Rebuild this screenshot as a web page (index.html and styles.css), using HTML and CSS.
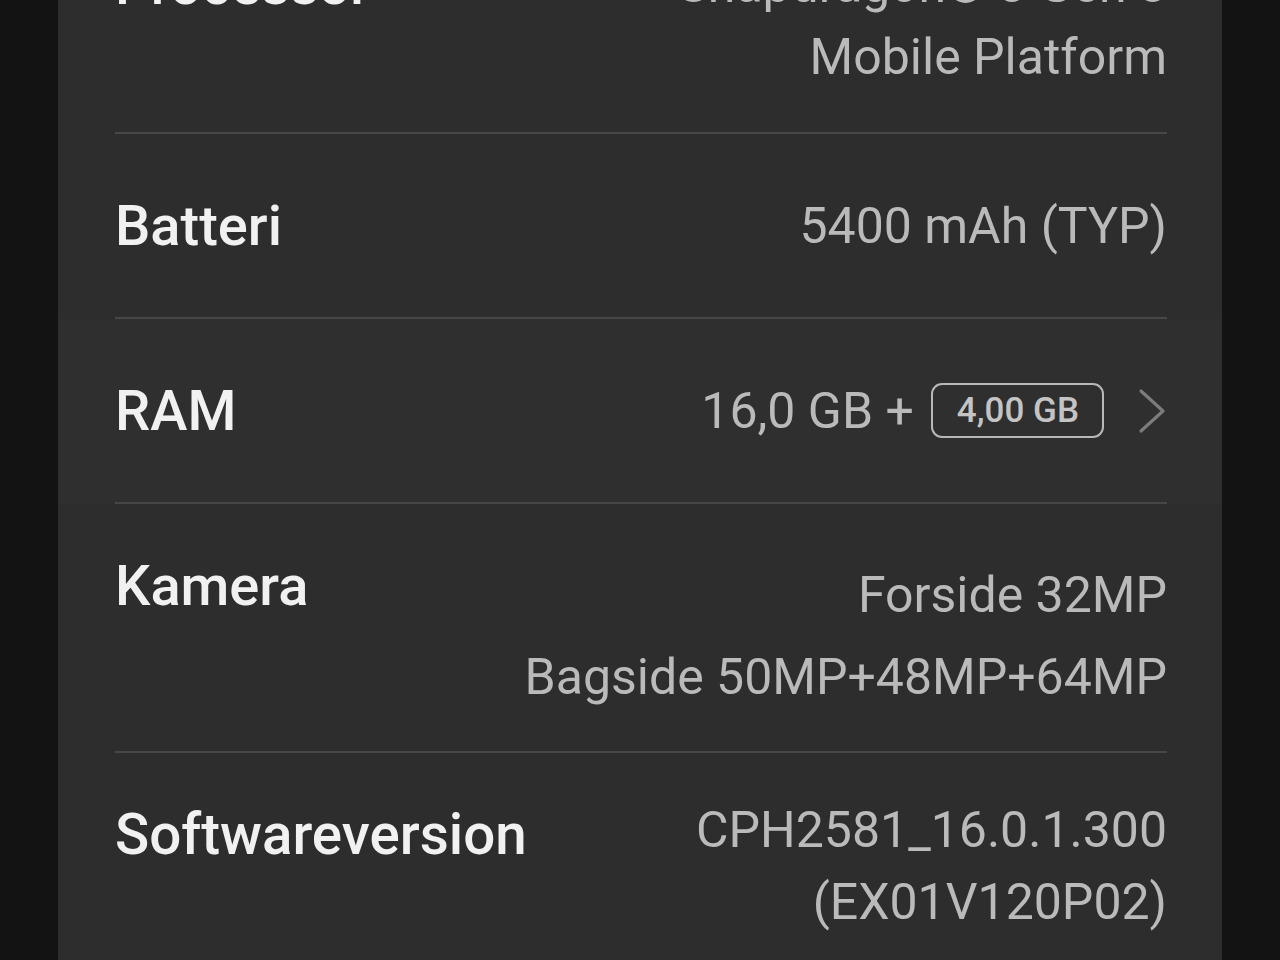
FILE: index.html
```html
<!DOCTYPE html>
<html lang="da">
<head>
<meta charset="utf-8">
<title>Om telefonen</title>
<link rel="stylesheet" href="styles.css">
</head>
<body>
<main class="card">
  <section class="item item--processor">
    <div class="row row--top">
      <div class="label">Processor</div>
      <div class="value">
        <div class="line">Snapdragon® 8 Gen 3</div>
        <div class="line">Mobile Platform</div>
      </div>
    </div>
  </section>
  <section class="item item--single">
    <div class="row row--center">
      <div class="label">Batteri</div>
      <div class="value"><div class="line">5400 mAh (TYP)</div></div>
    </div>
  </section>
  <section class="item item--single item--active">
    <div class="row row--center">
      <div class="label">RAM</div>
      <div class="value value--ram">
        <span class="ram-base">16,0 GB +</span>
        <span class="badge">4,00 GB</span>
        <svg class="chevron" width="30" height="46" viewBox="0 0 30 46" aria-hidden="true">
          <polyline points="4,3 26,23 4,43" fill="none" stroke="#7c7c7c" stroke-width="3.2" stroke-linecap="round" stroke-linejoin="round"/>
        </svg>
      </div>
    </div>
  </section>
  <section class="item item--camera">
    <div class="row row--top">
      <div class="label">Kamera</div>
      <div class="value value--stack">
        <div class="line">Forside 32MP</div>
        <div class="line">Bagside 50MP+48MP+64MP</div>
      </div>
    </div>
  </section>
  <section class="item item--software">
    <div class="row row--top">
      <div class="label">Softwareversion</div>
      <div class="value">
        <div class="line">CPH2581_16.0.1.300</div>
        <div class="line">(EX01V120P02)</div>
      </div>
    </div>
  </section>
</main>
</body>
</html>
```

FILE: styles.css
```css
html, body {
  margin: 0;
  padding: 0;
}

body {
  background: #131313;
  height: 960px;
  overflow: hidden;
  font-family: Roboto, "Noto Sans", "Liberation Sans", sans-serif;
}

.card {
  margin: -93px 58px 0 58px;
  background: #2d2d2d;
}

.item {
  padding: 0 55px 0 57px;
}

.item--active {
  background: #2f2f2f;
}

.row {
  display: flex;
  justify-content: space-between;
  border-bottom: 2px solid #474747;
}

.row--top {
  align-items: flex-start;
}

.row--center {
  align-items: center;
  height: 183px;
}

.item--processor .row {
  padding: 42px 0 39px;
}

.item--camera .row {
  padding: 55px 0 38px;
}

.item--software .row {
  padding: 41px 0 40px;
  border-bottom: none;
}

.label {
  color: #f1f1f1;
  font-size: 56px;
  font-weight: 500;
  line-height: 72px;
  white-space: nowrap;
}

.item--camera .label {
  line-height: 54px;
}

.item--software .label {
  font-size: 56.5px;
  margin-top: 5px;
}

.value {
  color: #bababa;
  font-size: 50px;
  font-weight: 400;
  line-height: 72px;
  text-align: right;
  white-space: nowrap;
}

.value--stack {
  display: flex;
  flex-direction: column;
  gap: 10px;
}

.value--ram {
  display: flex;
  align-items: center;
}

.ram-base {
  margin-right: 17px;
}

.badge {
  display: flex;
  align-items: center;
  height: 51px;
  padding: 0 23px 0 24px;
  border: 2.5px solid #b8b8b8;
  border-radius: 11px;
  color: #c4c4c4;
  font-size: 35px;
  font-weight: 500;
  line-height: 1;
}

.chevron {
  margin-left: 33px;
  display: block;
}
```
